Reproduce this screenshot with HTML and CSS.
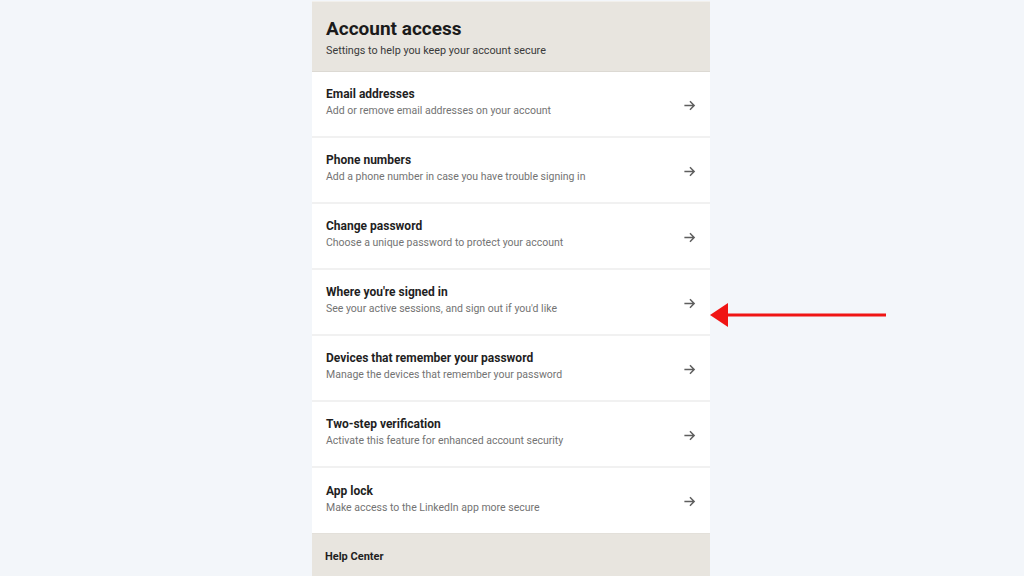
FILE: index.html
```html
<!DOCTYPE html>
<html lang="en">

<head>
    <meta charset="UTF-8">
    <meta name="viewport" content="width=device-width, initial-scale=1.0">
    <title>Account access</title>
    <link rel="stylesheet" href="styles.css">
</head>

<body>
    <div class="panel">
        <div class="panel-head">
            <h1>Account access</h1>
            <p>Settings to help you keep your account secure</p>
        </div>
        <ul class="rows">
            <li>
                <div class="txt"><b>Email addresses</b><span>Add or remove email addresses on your account</span></div>
                <svg class="go" viewBox="0 0 14 14"><path d="M1.5 7h10.5M7.5 2.5 12 7l-4.5 4.5"/></svg>
            </li>
            <li>
                <div class="txt"><b>Phone numbers</b><span>Add a phone number in case you have trouble signing in</span></div>
                <svg class="go" viewBox="0 0 14 14"><path d="M1.5 7h10.5M7.5 2.5 12 7l-4.5 4.5"/></svg>
            </li>
            <li>
                <div class="txt"><b>Change password</b><span>Choose a unique password to protect your account</span></div>
                <svg class="go" viewBox="0 0 14 14"><path d="M1.5 7h10.5M7.5 2.5 12 7l-4.5 4.5"/></svg>
            </li>
            <li class="marked">
                <div class="txt"><b>Where you're signed in</b><span>See your active sessions, and sign out if you'd like</span></div>
                <svg class="go" viewBox="0 0 14 14"><path d="M1.5 7h10.5M7.5 2.5 12 7l-4.5 4.5"/></svg>
                <!-- red pointer drawn over the page -->
                <svg class="pointer" width="178" height="26" viewBox="0 0 178 26">
                    <path d="M0 13 18 1v24z" fill="#f01414"/>
                    <path d="M16 13h160" stroke="#f01414" stroke-width="3"/>
                </svg>
            </li>
            <li>
                <div class="txt"><b>Devices that remember your password</b><span>Manage the devices that remember your password</span></div>
                <svg class="go" viewBox="0 0 14 14"><path d="M1.5 7h10.5M7.5 2.5 12 7l-4.5 4.5"/></svg>
            </li>
            <li>
                <div class="txt"><b>Two-step verification</b><span>Activate this feature for enhanced account security</span></div>
                <svg class="go" viewBox="0 0 14 14"><path d="M1.5 7h10.5M7.5 2.5 12 7l-4.5 4.5"/></svg>
            </li>
            <li>
                <div class="txt"><b>App lock</b><span>Make access to the LinkedIn app more secure</span></div>
                <svg class="go" viewBox="0 0 14 14"><path d="M1.5 7h10.5M7.5 2.5 12 7l-4.5 4.5"/></svg>
            </li>
        </ul>
        <div class="panel-foot">Help Center</div>
    </div>
</body>

</html>
```

FILE: styles.css
```css
* {
    margin: 0;
    padding: 0;
    box-sizing: border-box;
}

body {
    background: #f3f6fa;
    font-family: Roboto, "Liberation Sans", Arial, sans-serif;
    color: #1f1f1f;
    height: 576px;
    overflow: hidden;
}

.panel {
    width: 398px;
    margin-left: 312px;
    margin-top: 1px;
    border-top: 1px solid #f2f0ec;
}

.panel-head {
    background: #e8e5df;
    height: 70px;
    padding: 15px 14px 0;
    border-bottom: 1px solid #dcd9d3;
}

.panel-head h1 {
    font-size: 19px;
    font-weight: 700;
    line-height: 24px;
    color: #1b1b1b;
}

.panel-head p {
    font-size: 10.8px;
    line-height: 14px;
    margin-top: 3px;
    color: #3a3a3a;
}

.rows {
    list-style: none;
    background: #fff;
}

.rows li {
    height: 66px;
    display: flex;
    align-items: center;
    padding: 0 14px;
    border-bottom: 2px solid #f1f1f1;
    position: relative;
}

.rows li:last-child {
    border-bottom: 1px solid #e3e0da;
}

.txt {
    flex: 1;
    display: flex;
    flex-direction: column;
    padding-bottom: 4px;
}

.txt b {
    font-size: 12px;
    font-weight: 700;
    line-height: 16px;
    color: #1f1f1f;
}

.txt span {
    font-size: 10.5px;
    line-height: 14px;
    margin-top: 2px;
    color: #737373;
}

.go {
    width: 13px;
    height: 13px;
    fill: none;
    stroke: #5e5e5e;
    stroke-width: 1.6;
    margin-top: 2px;
}

.pointer {
    position: absolute;
    left: 398px;
    top: 32px;
}

.panel-foot {
    background: #e8e5df;
    height: 42px;
    padding: 16px 13px 0;
    font-size: 11px;
    font-weight: 700;
    color: #1f1f1f;
}
```
